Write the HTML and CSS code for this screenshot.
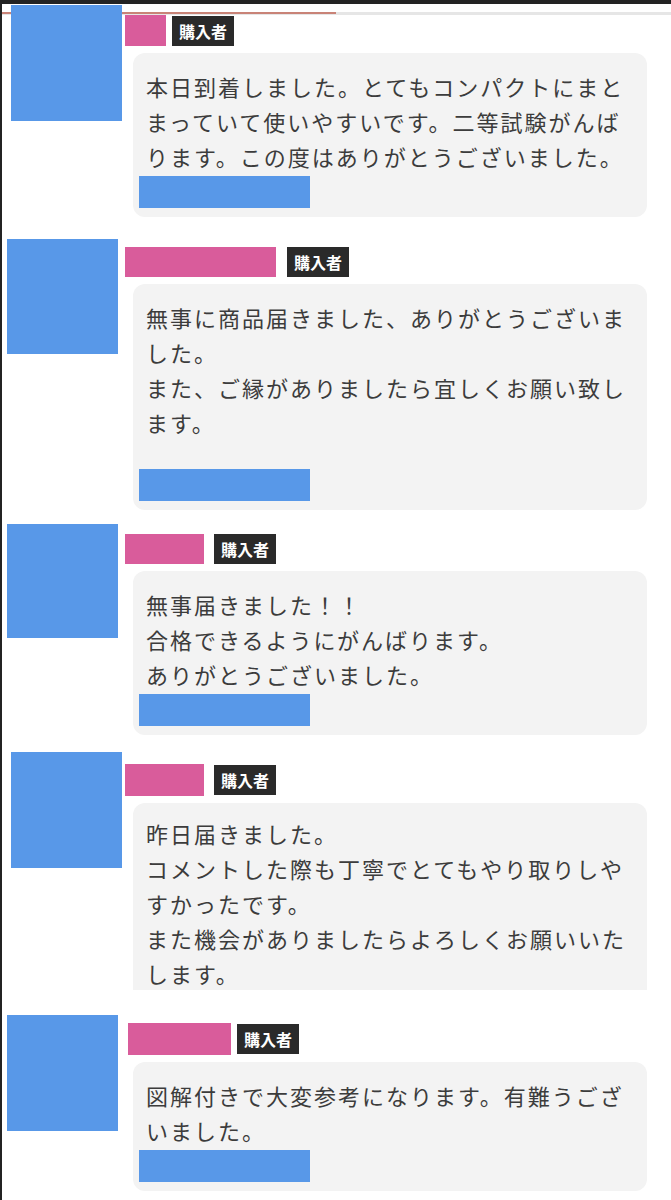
FILE: index.html
```html
<!DOCTYPE html>
<html lang="ja">
<head>
    <meta charset="UTF-8">
    <title>評価一覧</title>
    <meta name="viewport" content="width=device-width, initial-scale=1.0">
    <link rel="stylesheet" href="styles.css">
</head>
<body>
    <main class="reviews">
        <article class="review r1">
            <div class="avatar"></div>
            <div class="review-body">
                <div class="review-head">
                    <span class="name"></span>
                    <span class="badge">購入者</span>
                </div>
                <div class="bubble">
                    <p class="comment">本日到着しました。とてもコンパクトにまとまっていて使いやすいです。二等試験がんばります。この度はありがとうございました。</p>
                    <div class="date"></div>
                </div>
            </div>
        </article>

        <article class="review r2">
            <div class="avatar"></div>
            <div class="review-body">
                <div class="review-head">
                    <span class="name"></span>
                    <span class="badge">購入者</span>
                </div>
                <div class="bubble">
                    <p class="comment">無事に商品届きました、ありがとうございました。<br>また、ご縁がありましたら宜しくお願い致します。</p>
                    <div class="date"></div>
                </div>
            </div>
        </article>

        <article class="review r3">
            <div class="avatar"></div>
            <div class="review-body">
                <div class="review-head">
                    <span class="name"></span>
                    <span class="badge">購入者</span>
                </div>
                <div class="bubble">
                    <p class="comment">無事届きました！！<br>合格できるようにがんばります。<br>ありがとうございました。</p>
                    <div class="date"></div>
                </div>
            </div>
        </article>

        <article class="review r4">
            <div class="avatar"></div>
            <div class="review-body">
                <div class="review-head">
                    <span class="name"></span>
                    <span class="badge">購入者</span>
                </div>
                <div class="bubble">
                    <p class="comment">昨日届きました。<br>コメントした際も丁寧でとてもやり取りしやすかったです。<br>また機会がありましたらよろしくお願いいたします。</p>
                    <div class="date"></div>
                </div>
            </div>
        </article>

        <article class="review r5">
            <div class="avatar"></div>
            <div class="review-body">
                <div class="review-head">
                    <span class="name"></span>
                    <span class="badge">購入者</span>
                </div>
                <div class="bubble">
                    <p class="comment">図解付きで大変参考になります。有難うございました。</p>
                    <div class="date"></div>
                </div>
            </div>
        </article>
    </main>
</body>
</html>
```

FILE: styles.css
```css
body {
    margin: 0;
    min-height: 100vh;
    font-family: "Noto Sans CJK JP", "Noto Sans", sans-serif;
    color: #3c3c3c;
    background:
        linear-gradient(#232323, #232323) 0 0 / 100% 4px no-repeat,
        linear-gradient(#232323, #232323) 0 0 / 2px 100% no-repeat,
        linear-gradient(#c98377, #c98377) 0 12px / 336px 2px no-repeat,
        linear-gradient(#e6e6e6, #e6e6e6) 0 12px / 100% 3px no-repeat,
        #fff;
}
.reviews {
    display: flex;
    flex-direction: column;
}
.review {
    display: grid;
    grid-template-columns: 125px 1fr;
    align-items: start;
}
.avatar {
    width: 111px;
    height: 116px;
    margin-left: 7px;
    background: #5898e8;
}
.review-head {
    display: flex;
    align-items: center;
    gap: 10px;
}
.name {
    display: block;
    width: 79px;
    height: 31px;
    background: #d95c9b;
}
.badge {
    display: block;
    height: 30px;
    padding: 0 7px;
    line-height: 30px;
    font-size: 16px;
    font-weight: 700;
    color: #fff;
    background: #2a2a2a;
}
.bubble {
    margin: 7px 24px 0 8px;
    padding: 16px 17px 9px 13px;
    background: #f3f3f3;
    border-radius: 12px;
}
.comment {
    margin: 0 0 2px;
    font-size: 22px;
    letter-spacing: 2px;
    line-height: 35px;
}
.date {
    width: 171px;
    height: 32px;
    margin-left: -7px;
    background: #5898e8;
}

/* each review in the capture sits a little differently */
.r1 { margin-top: 5px; }
.r1 .avatar { margin-left: 11px; }
.r1 .review-head { padding-top: 10px; gap: 6px; }
.r1 .name { width: 41px; }

.r2 { margin-top: 22px; }
.r2 .avatar { height: 115px; }
.r2 .review-head { padding-top: 8px; gap: 11px; }
.r2 .name { width: 151px; height: 30px; }
.r2 .comment { margin-bottom: 29px; }

.r3 { margin-top: 14px; }
.r3 .avatar { height: 114px; }
.r3 .review-head { padding-top: 10px; }
.r3 .name { height: 30px; }

.r4 { margin-top: 17px; }
.r4 .avatar { margin-left: 11px; }
.r4 .review-head { padding-top: 12px; }
.r4 .name { height: 32px; }
.r4 .bubble {
    height: 187px;
    box-sizing: border-box;
    padding-top: 13px;
    overflow: hidden;
    border-radius: 12px 12px 0 0;
}

.r5 { margin-top: 25px; }
.r5 .review-head { padding-top: 8px; gap: 6px; }
.r5 .name { width: 103px; height: 32px; margin-left: 3px; }
```
